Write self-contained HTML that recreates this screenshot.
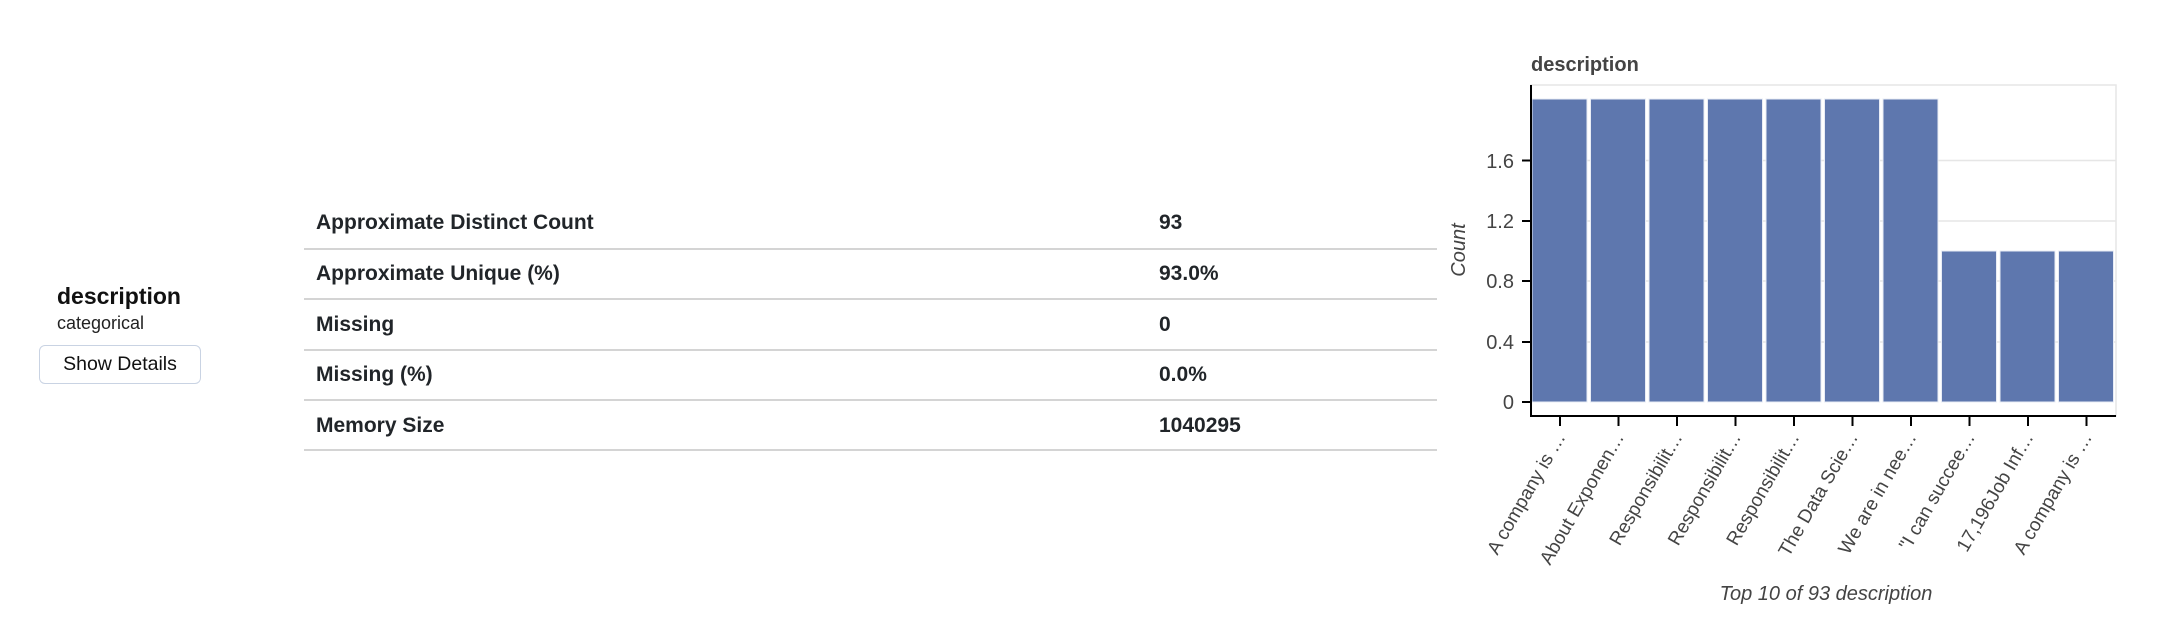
<!DOCTYPE html>
<html><head><meta charset="utf-8"><style>
html,body{margin:0;padding:0;background:#fff;width:2170px;height:632px;overflow:hidden;font-family:"Liberation Sans",Arial,sans-serif;}
.abs{position:absolute;}
.t{font-weight:bold;font-size:21px;color:#212529;}
.line{position:absolute;left:304px;width:1133px;height:2px;background:#d4d4d4;}
.btn{position:absolute;left:39px;top:345px;width:160px;height:37px;border:1px solid #c9d3e3;border-radius:6px;font-size:19.5px;color:#111;text-align:center;line-height:37px;}
</style></head><body>
<div class="abs" style="left:57px;top:283px;font-size:23px;font-weight:bold;color:#111">description</div>
<div class="abs" style="left:57px;top:313px;font-size:18px;color:#222">categorical</div>
<div class="btn">Show Details</div>

<div class="abs t" style="left:316px;top:211px">Approximate Distinct Count</div>
<div class="abs t" style="left:1159px;top:211px">93</div>
<div class="line" style="top:248px"></div>
<div class="abs t" style="left:316px;top:262px">Approximate Unique (%)</div>
<div class="abs t" style="left:1159px;top:262px">93.0%</div>
<div class="line" style="top:298px"></div>
<div class="abs t" style="left:316px;top:313px">Missing</div>
<div class="abs t" style="left:1159px;top:313px">0</div>
<div class="line" style="top:349px"></div>
<div class="abs t" style="left:316px;top:363px">Missing (%)</div>
<div class="abs t" style="left:1159px;top:363px">0.0%</div>
<div class="line" style="top:399px"></div>
<div class="abs t" style="left:316px;top:414px">Memory Size</div>
<div class="abs t" style="left:1159px;top:414px">1040295</div>
<div class="line" style="top:449px"></div>

<svg class="abs" style="left:0;top:0" width="2170" height="632" font-family="Liberation Sans, Arial, sans-serif">
<text x="1531" y="71" font-size="20" font-weight="bold" fill="#444">description</text>
<rect x="1531" y="85" width="585" height="331" fill="none" stroke="#e6e6e6" stroke-width="1.5"/>
<g stroke="#e6e6e6" stroke-width="1.5">
<line x1="1531" x2="2116" y1="160.5" y2="160.5"/><line x1="1531" x2="2116" y1="221" y2="221"/>
<line x1="1531" x2="2116" y1="281" y2="281"/><line x1="1531" x2="2116" y1="342" y2="342"/>
</g>
<g fill="#5e77ae" stroke="#e8ecf5" stroke-width="1">
<rect x="1532" y="99" width="55" height="303"/>
<rect x="1590.5" y="99" width="55" height="303"/>
<rect x="1649" y="99" width="55" height="303"/>
<rect x="1707.5" y="99" width="55" height="303"/>
<rect x="1766" y="99" width="55" height="303"/>
<rect x="1824.5" y="99" width="55" height="303"/>
<rect x="1883" y="99" width="55" height="303"/>
<rect x="1941.5" y="251" width="55" height="151"/>
<rect x="2000" y="251" width="55" height="151"/>
<rect x="2058.5" y="251" width="55" height="151"/>
</g>
<g stroke="#000" stroke-width="2">
<line x1="1531" y1="85" x2="1531" y2="416"/>
<line x1="1530" y1="416" x2="2116" y2="416"/>
<line x1="1522" x2="1531" y1="160.5" y2="160.5"/><line x1="1522" x2="1531" y1="221" y2="221"/>
<line x1="1522" x2="1531" y1="281" y2="281"/><line x1="1522" x2="1531" y1="342" y2="342"/>
<line x1="1522" x2="1531" y1="402" y2="402"/>
<line x1="1560" x2="1560" y1="416" y2="426"/><line x1="1618.5" x2="1618.5" y1="416" y2="426"/>
<line x1="1677" x2="1677" y1="416" y2="426"/><line x1="1735.5" x2="1735.5" y1="416" y2="426"/>
<line x1="1794" x2="1794" y1="416" y2="426"/><line x1="1852.5" x2="1852.5" y1="416" y2="426"/>
<line x1="1911" x2="1911" y1="416" y2="426"/><line x1="1969.5" x2="1969.5" y1="416" y2="426"/>
<line x1="2028" x2="2028" y1="416" y2="426"/><line x1="2086.5" x2="2086.5" y1="416" y2="426"/>
</g>
<g font-size="20" fill="#444" text-anchor="end">
<text x="1514" y="168">1.6</text><text x="1514" y="228">1.2</text>
<text x="1514" y="288">0.8</text><text x="1514" y="349">0.4</text>
<text x="1514" y="409">0</text>
</g>
<text transform="translate(1465,250) rotate(-90)" font-size="20" font-style="italic" fill="#444" text-anchor="middle">Count</text>
<g font-size="19" fill="#444" text-anchor="end">
<text transform="translate(1566,437) rotate(-60)">A company is …</text>
<text transform="translate(1624.5,437) rotate(-60)">About Exponen…</text>
<text transform="translate(1683,437) rotate(-60)">Responsibilit…</text>
<text transform="translate(1741.5,437) rotate(-60)">Responsibilit…</text>
<text transform="translate(1800,437) rotate(-60)">Responsibilit…</text>
<text transform="translate(1858.5,437) rotate(-60)">The Data Scie…</text>
<text transform="translate(1917,437) rotate(-60)">We are in nee…</text>
<text transform="translate(1975.5,437) rotate(-60)">"I can succee…</text>
<text transform="translate(2034,437) rotate(-60)">17,196Job Inf…</text>
<text transform="translate(2092.5,437) rotate(-60)">A company is …</text>
</g>
<text x="1826" y="600" font-size="20" font-style="italic" fill="#444" text-anchor="middle">Top 10 of 93 description</text>
</svg>
</body></html>
